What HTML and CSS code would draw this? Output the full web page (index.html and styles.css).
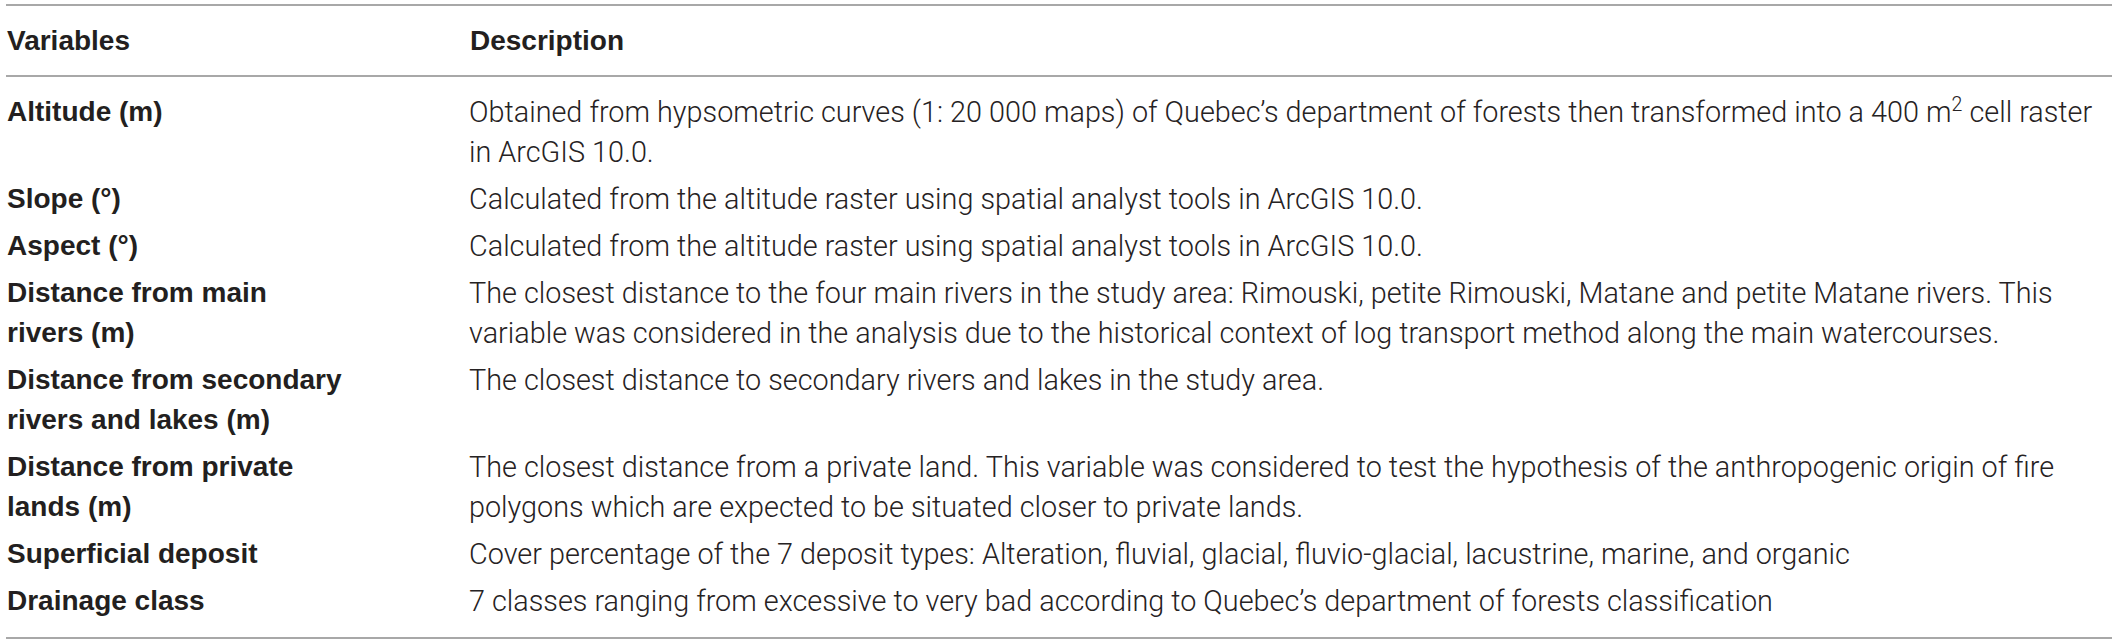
FILE: index.html
```html
<!DOCTYPE html>
<html lang="en">
<head>
<meta charset="utf-8">
<title>Variables</title>
<link rel="stylesheet" href="styles.css">
</head>
<body>
<table class="vars">
  <colgroup>
    <col class="col-var">
    <col class="col-desc">
  </colgroup>
  <thead>
    <tr>
      <th>Variables</th>
      <th>Description</th>
    </tr>
  </thead>
  <tbody>
    <tr>
      <td class="name">Altitude (m)</td>
      <td class="desc">Obtained from hypsometric curves (1: 20 000 maps) of Quebec’s department of forests then transformed into a 400 m<sup>2</sup> cell raster<br>in ArcGIS 10.0.</td>
    </tr>
    <tr>
      <td class="name">Slope (°)</td>
      <td class="desc">Calculated from the altitude raster using spatial analyst tools in ArcGIS 10.0.</td>
    </tr>
    <tr>
      <td class="name">Aspect (°)</td>
      <td class="desc">Calculated from the altitude raster using spatial analyst tools in ArcGIS 10.0.</td>
    </tr>
    <tr>
      <td class="name">Distance from main<br>rivers (m)</td>
      <td class="desc">The closest distance to the four main rivers in the study area: Rimouski, petite Rimouski, Matane and petite Matane rivers. This<br>variable was considered in the analysis due to the historical context of log transport method along the main watercourses.</td>
    </tr>
    <tr>
      <td class="name">Distance from secondary<br>rivers and lakes (m)</td>
      <td class="desc">The closest distance to secondary rivers and lakes in the study area.</td>
    </tr>
    <tr>
      <td class="name">Distance from private<br>lands (m)</td>
      <td class="desc">The closest distance from a private land. This variable was considered to test the hypothesis of the anthropogenic origin of fire<br>polygons which are expected to be situated closer to private lands.</td>
    </tr>
    <tr>
      <td class="name">Superficial deposit</td>
      <td class="desc">Cover percentage of the 7 deposit types: Alteration, fluvial, glacial, fluvio-glacial, lacustrine, marine, and organic</td>
    </tr>
    <tr>
      <td class="name">Drainage class</td>
      <td class="desc">7 classes ranging from excessive to very bad according to Quebec’s department of forests classification</td>
    </tr>
  </tbody>
</table>
</body>
</html>
```

FILE: styles.css
```css
html, body {
  margin: 0;
  padding: 0;
  background: #ffffff;
}

body {
  padding-top: 4px;
}

.vars {
  margin-left: 6px;
  width: 2106px;
  table-layout: fixed;
  border-collapse: collapse;
  border-top: 2px solid #a8a8a8;
  border-bottom: 2px solid #a8a8a8;
  color: #231f20;
}

.col-var {
  width: 463px;
}

.vars th,
.vars td {
  padding: 3.5px 0 3.5px 1px;
  text-align: left;
  vertical-align: top;
  line-height: 40px;
  white-space: nowrap;
}

.vars th {
  padding-top: 15px;
  padding-bottom: 14px;
  border-bottom: 2px solid #a8a8a8;
  font-family: "Liberation Sans", Arial, Helvetica, sans-serif;
  font-weight: bold;
  font-size: 28px;
}

.vars td.name {
  font-family: "Liberation Sans", Arial, Helvetica, sans-serif;
  font-weight: bold;
  font-size: 28px;
}

.vars td.desc {
  padding-left: 0;
  font-family: Roboto, "Liberation Sans", sans-serif;
  font-weight: 300;
  font-size: 28.8px;
  color: #262223;
}

.vars tbody tr:first-child td {
  padding-top: 15px;
}

.vars tbody tr:last-child td {
  padding-bottom: 16px;
}

.vars sup {
  font-size: 0.68em;
  line-height: 0;
  vertical-align: 0.55em;
}
```
